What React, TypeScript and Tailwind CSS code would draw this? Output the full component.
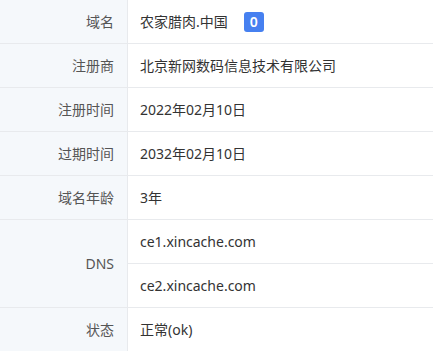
const rows: { label: string; values: string[]; badge?: string }[] = [
  { label: "域名", values: ["农家腊肉.中国"], badge: "0" },
  { label: "注册商", values: ["北京新网数码信息技术有限公司"] },
  { label: "注册时间", values: ["2022年02月10日"] },
  { label: "过期时间", values: ["2032年02月10日"] },
  { label: "域名年龄", values: ["3年"] },
  { label: "DNS", values: ["ce1.xincache.com", "ce2.xincache.com"] },
  { label: "状态", values: ["正常(ok)"] },
];

export default function App() {
  return (
    <div
      className="w-[433px] h-[351px] overflow-hidden bg-white text-[14px] text-[#333]"
      style={{ fontFamily: '"Noto Sans", "Noto Sans CJK SC", sans-serif' }}
    >
      {rows.map((row) => (
        <div key={row.label} className="flex border-b border-[#e8eaed]">
          <div className="w-[128px] shrink-0 flex items-center justify-end pr-[13px] bg-[#f5f8fb] border-r border-[#e8eaed] text-[#555]">
            {row.label}
          </div>
          <div className="flex-1 flex flex-col">
            {row.values.map((v, i) => (
              <div
                key={v}
                className={`h-[43px] flex items-center pl-[12px] ${
                  i < row.values.length - 1 ? "h-[44px] border-b border-[#e8eaed]" : ""
                }`}
              >
                <span>{v}</span>
                {row.badge && (
                  <span className="ml-[16px] w-[20px] h-[20px] rounded-[3px] bg-[#4680f0] text-white text-[14px] font-semibold flex items-center justify-center">
                    {row.badge}
                  </span>
                )}
              </div>
            ))}
          </div>
        </div>
      ))}
    </div>
  );
}
